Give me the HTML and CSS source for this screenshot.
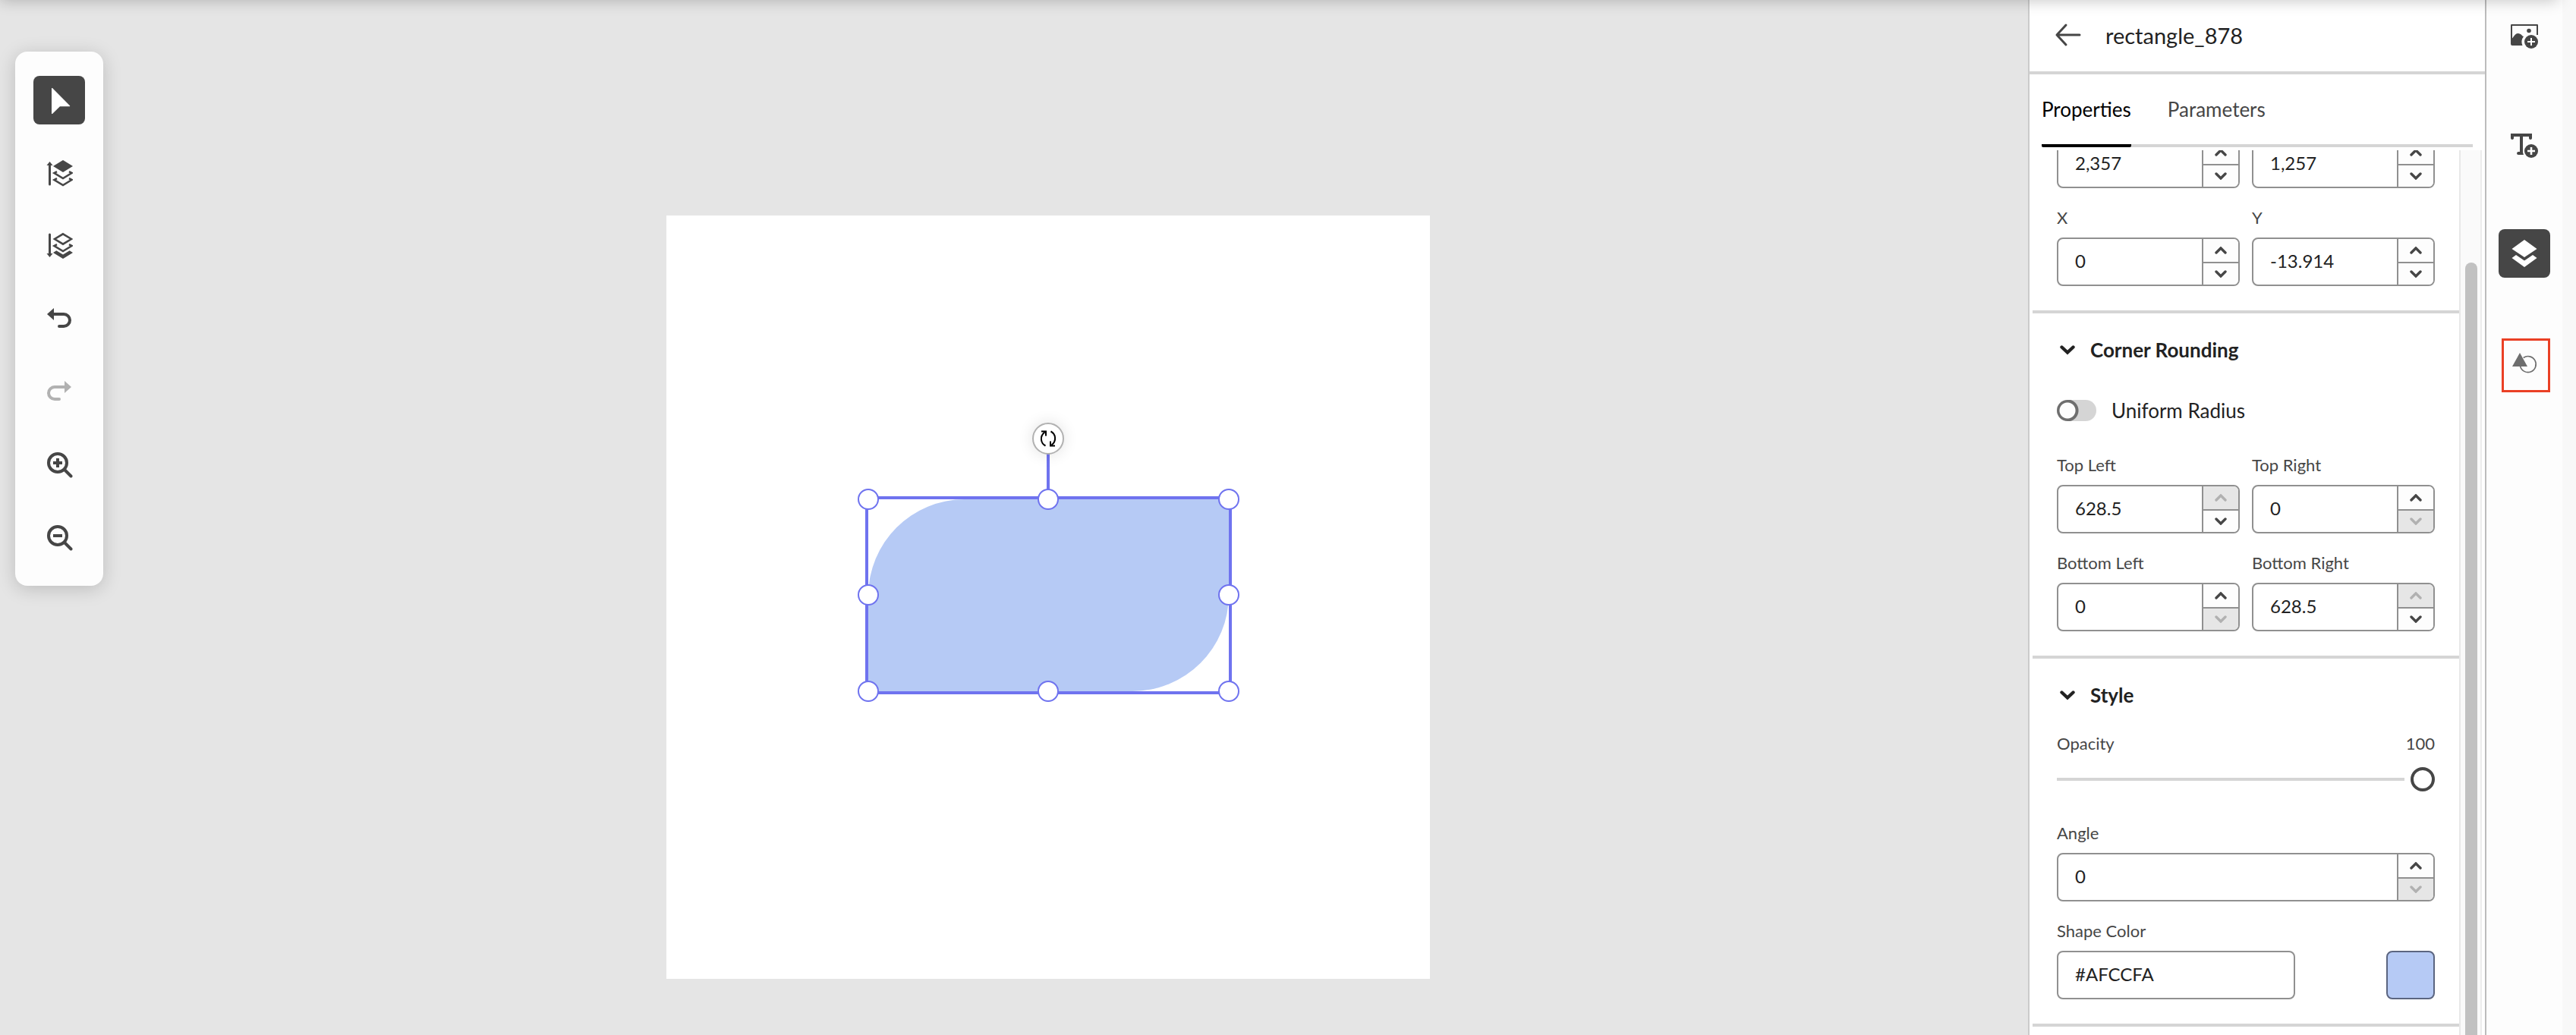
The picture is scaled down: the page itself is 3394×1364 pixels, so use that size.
FILE: index.html
```html
<!DOCTYPE html>
<html lang="en">
<head>
<meta charset="utf-8">
<title>Template editor</title>
<link rel="stylesheet" href="styles.css">
</head>
<body>
<svg class="sprite" aria-hidden="true">
  <symbol id="chev-up" viewBox="0 0 16 10"><path d="M2 8 8 2l6 6" fill="none" stroke="currentColor" stroke-width="3.400" stroke-linecap="round"/></symbol>
  <symbol id="chev-down" viewBox="0 0 16 10"><path d="M2 2l6 6 6-6" fill="none" stroke="currentColor" stroke-width="3.400" stroke-linecap="round"/></symbol>
  <symbol id="chev-section" viewBox="0 0 20 14"><path d="M2.500 3.500 10 10.500l7.500-7" fill="none" stroke="currentColor" stroke-width="4.400" stroke-linecap="round"/></symbol>
</svg>
<div class="app">
  <main class="stage">
    <div class="toolbar" role="toolbar" aria-label="Canvas tools">
      <button class="tool tool-active" aria-label="Select"><svg viewBox="0 0 36 36"><path d="M8 2.500c0-.6.600-.8 1-.4L32 25.300c.4.400.2.900-.3.900H19L9 36c-.4.400-1 .2-1-.4z" fill="#fff"/></svg></button>
      <button class="tool" aria-label="Bring to front"><svg viewBox="0 0 36 36"><path d="M5.500 8v25" stroke="currentColor" stroke-width="3" stroke-linecap="round"/><path d="M5.500 3 9.500 8h-8z" fill="currentColor"/><path d="M23 1 36 9 23 17 10 9z" fill="currentColor"/><path d="M15 16.200 11.500 18 23 25l11.500-7-3.500-1.800M15 25.200 11.500 27 23 34l11.500-7-3.500-1.800" fill="none" stroke="currentColor" stroke-width="2.600"/></svg></button>
      <button class="tool" aria-label="Send to back"><svg viewBox="0 0 36 36"><path d="M5.500 3v25" stroke="currentColor" stroke-width="3" stroke-linecap="round"/><path d="M5.500 33 9.500 28h-8z" fill="currentColor"/><path d="M23 2.300 34 9 23 15.700 12 9zM15 16.200 11.500 18 23 25l11.500-7-3.500-1.800" fill="none" stroke="currentColor" stroke-width="2.600"/><path d="M10 27l4.300-2.700L23 29.500l8.700-5.200L36 27 23 35z" fill="currentColor"/></svg></button>
      <button class="tool" aria-label="Undo"><svg viewBox="0 0 36 36"><path d="M9 12h15a8 8 0 0 1 0 16h-6" fill="none" stroke="currentColor" stroke-width="4" stroke-linecap="round"/><path d="M2 12 11 4v16z" fill="currentColor"/></svg></button>
      <button class="tool" aria-label="Redo" disabled><svg viewBox="0 0 36 36"><path d="M27 12H12a8 8 0 0 0 0 16h6" fill="none" stroke="currentColor" stroke-width="4" stroke-linecap="round"/><path d="M34 12 25 4v16z" fill="currentColor"/></svg></button>
      <button class="tool" aria-label="Zoom in"><svg viewBox="0 0 36 36"><circle cx="16" cy="16" r="12" fill="none" stroke="currentColor" stroke-width="4"/><path d="M25 25l8.500 8.500" stroke="currentColor" stroke-width="4" stroke-linecap="round"/><path d="M16 10v12M10 16h12" stroke="currentColor" stroke-width="4"/></svg></button>
      <button class="tool" aria-label="Zoom out"><svg viewBox="0 0 36 36"><circle cx="16" cy="16" r="12" fill="none" stroke="currentColor" stroke-width="4"/><path d="M25 25l8.500 8.500" stroke="currentColor" stroke-width="4" stroke-linecap="round"/><path d="M10 16h12" stroke="currentColor" stroke-width="4"/></svg></button>
    </div>
    <div class="artboard">
      <div class="selection">
        <div class="shape"></div>
        <div class="stem"></div>
        <button class="rotate" aria-label="Rotate"><svg viewBox="0 0 24 24" fill="none" stroke="#000" stroke-width="2"><path d="M8.500 21.500C2 18 .5 9 7.500 3.500M3 2.500h6v6M15.500 2.500C22 6 23.500 15 16.500 20.500M21 21.500h-6v-6"/></svg></button>
        <i class="handle left top"></i><i class="handle middle top"></i><i class="handle right top"></i>
        <i class="handle left center"></i><i class="handle right center"></i>
        <i class="handle left bottom"></i><i class="handle middle bottom"></i><i class="handle right bottom"></i>
      </div>
    </div>
  </main>

  <aside class="panel">
    <header class="panel-head">
      <button class="back" aria-label="Back"><svg viewBox="0 0 36 32" fill="none" stroke="currentColor" stroke-width="3" stroke-linecap="round" stroke-linejoin="round"><path d="M34 16H4M16 3 4 16l12 13"/></svg></button>
      <h1 class="title">rectangle_878</h1>
    </header>
    <div class="tabs" role="tablist">
      <button class="tab tab-active" role="tab" aria-selected="true">Properties</button>
      <button class="tab" role="tab" aria-selected="false">Parameters</button>
    </div>
    <div class="scroller">
      <div class="sections">
        <section class="section section-scrolled">
          <div class="fields">
            <div class="stepper"><input aria-label="Width" value="2,357"><div class="steps"><button aria-label="Increase width"><svg><use href="#chev-up"/></svg></button><button aria-label="Decrease width"><svg><use href="#chev-down"/></svg></button></div></div>
            <div class="stepper"><input aria-label="Height" value="1,257"><div class="steps"><button aria-label="Increase height"><svg><use href="#chev-up"/></svg></button><button aria-label="Decrease height"><svg><use href="#chev-down"/></svg></button></div></div>
            <div class="field"><label for="x">X</label><div class="stepper"><input id="x" value="0"><div class="steps"><button aria-label="Increase X"><svg><use href="#chev-up"/></svg></button><button aria-label="Decrease X"><svg><use href="#chev-down"/></svg></button></div></div></div>
            <div class="field"><label for="y">Y</label><div class="stepper"><input id="y" value="-13.914"><div class="steps"><button aria-label="Increase Y"><svg><use href="#chev-up"/></svg></button><button aria-label="Decrease Y"><svg><use href="#chev-down"/></svg></button></div></div></div>
          </div>
        </section>

        <section class="section">
          <h2 class="section-title"><svg><use href="#chev-section"/></svg>Corner Rounding</h2>
          <label class="switch"><input type="checkbox">Uniform Radius</label>
          <div class="fields">
            <div class="field"><label for="tl">Top Left</label><div class="stepper"><input id="tl" value="628.5"><div class="steps"><button aria-label="Increase top left" disabled><svg><use href="#chev-up"/></svg></button><button aria-label="Decrease top left"><svg><use href="#chev-down"/></svg></button></div></div></div>
            <div class="field"><label for="tr">Top Right</label><div class="stepper"><input id="tr" value="0"><div class="steps"><button aria-label="Increase top right"><svg><use href="#chev-up"/></svg></button><button aria-label="Decrease top right" disabled><svg><use href="#chev-down"/></svg></button></div></div></div>
            <div class="field"><label for="bl">Bottom Left</label><div class="stepper"><input id="bl" value="0"><div class="steps"><button aria-label="Increase bottom left"><svg><use href="#chev-up"/></svg></button><button aria-label="Decrease bottom left" disabled><svg><use href="#chev-down"/></svg></button></div></div></div>
            <div class="field"><label for="br">Bottom Right</label><div class="stepper"><input id="br" value="628.5"><div class="steps"><button aria-label="Increase bottom right" disabled><svg><use href="#chev-up"/></svg></button><button aria-label="Decrease bottom right"><svg><use href="#chev-down"/></svg></button></div></div></div>
          </div>
        </section>

        <section class="section">
          <h2 class="section-title"><svg><use href="#chev-section"/></svg>Style</h2>
          <div class="slider-head"><label for="opacity">Opacity</label><output for="opacity">100</output></div>
          <input class="slider" id="opacity" type="range" min="0" max="100" value="100">
          <div class="fields fields-single">
            <div class="field"><label for="angle">Angle</label><div class="stepper"><input id="angle" value="0"><div class="steps"><button aria-label="Increase angle"><svg><use href="#chev-up"/></svg></button><button aria-label="Decrease angle" disabled><svg><use href="#chev-down"/></svg></button></div></div></div>
            <div class="field"><label for="color">Shape Color</label><div class="color-row"><input class="text-input" id="color" value="#AFCCFA"><button class="swatch" aria-label="Pick shape color"></button></div></div>
          </div>
        </section>
      </div>
      <div class="track"><div class="thumb"></div></div>
    </div>
  </aside>

  <nav class="rail" aria-label="Panels">
    <button class="rail-item" aria-label="Add image"><svg viewBox="0 -2 36 36"><path d="M35 16V3H1v25" fill="none" stroke="currentColor" stroke-width="2" stroke-linejoin="round"/><path d="M0 22c4-2 5-8 9.500-8S15 18 17 18a12 12 0 0 0-1.500 12H2a2 2 0 0 1-2-2z" fill="currentColor"/><circle cx="24" cy="10.500" r="2.800" fill="currentColor"/><circle cx="27" cy="25" r="9" fill="currentColor"/><path d="M27 20v10M22 25h10" stroke="#fff" stroke-width="2"/></svg></button>
    <button class="rail-item" aria-label="Add text"><svg viewBox="0 -2 36 36"><path d="M0 2h28v6c0 2.500-4 2.500-4 0V6h-8v20.500a12 12 0 0 0 1 3.500H10c-2.500 0-2.500-4 0-4h2V6H4v2c0 2.500-4 2.500-4 0z" fill="currentColor"/><circle cx="27" cy="25" r="9" fill="currentColor"/><path d="M27 20v10M22 25h10" stroke="#fff" stroke-width="2.600"/></svg></button>
    <button class="rail-item rail-active" aria-label="Layers"><svg viewBox="0 0 36 36"><path d="M18 0 34.500 12 18 23 1.500 12zM1.500 24 7 20l11 7.500L29 20l5.500 4L18 36z" fill="#fff"/></svg></button>
    <button class="rail-item rail-marked" aria-label="Shapes"><svg viewBox="2 1 36 36"><path d="M12 2 22 20H2z" fill="currentColor"/><path d="M16.700 8.500a10.500 10.500 0 1 1-4.200 11" fill="none" stroke="currentColor" stroke-width="1.600"/></svg></button>
  </nav>
  <div class="edge"></div>
  <div class="header-shadow"></div>
</div>
</body>
</html>
```
FILE: styles.css
```css
* { box-sizing: border-box; }

body {
  margin: 0;
  background: #e5e5e5;
  color: #222;
  font-family: Lato, "Open Sans", sans-serif;
  font-size: 24px;
}

button, input {
  margin: 0;
  padding: 0;
  border: 0;
  background: none;
  color: inherit;
  font: inherit;
}

.sprite { display: none; }

.app {
  position: relative;
  display: flex;
  height: 100vh;
  overflow: hidden;
}

.header-shadow {
  position: absolute;
  top: -20px;
  left: 0;
  right: 24px;
  height: 20px;
  box-shadow: 0 0 20px rgba(0, 0, 0, .25);
}

/* Canvas */

.stage {
  position: relative;
  flex: 1;
  min-width: 0;
}

.toolbar {
  position: absolute;
  top: 68px;
  left: 20px;
  display: flex;
  flex-direction: column;
  gap: 32px;
  padding: 32px 24px;
  border-radius: 16px;
  background: #fdfdfd;
  box-shadow: 0 4px 24px rgba(0, 0, 0, .18);
}

.tool {
  display: grid;
  place-items: center;
  width: 68px;
  height: 64px;
  border-radius: 8px;
  color: #464646;
}

.tool svg { width: 36px; height: 36px; }
.tool:disabled { color: #b1b1b1; }
.tool-active { background: #464646; }

.artboard {
  position: absolute;
  top: 284px;
  left: 878px;
  width: 1006px;
  height: 1006px;
  background: #fff;
}

.selection {
  position: absolute;
  top: 370px;
  left: 262px;
  width: 483px;
  height: 261px;
  border: 4px solid #6f73ef;
}

.shape {
  height: 100%;
  background: #b6caf5;
  border-radius: 127px 0;
}

.stem {
  position: absolute;
  left: 235px;
  top: -64px;
  width: 4px;
  height: 64px;
  background: #6f73ef;
}

.rotate {
  position: absolute;
  left: 216px;
  top: -101px;
  display: grid;
  place-items: center;
  width: 42px;
  height: 42px;
  border: 2px solid #b1b1b1;
  border-radius: 50%;
  background: #fff;
  box-shadow: 0 0 20px rgba(0, 0, 0, .12);
}

.rotate svg { width: 24px; height: 24px; }

.handle {
  position: absolute;
  width: 28px;
  height: 28px;
  border: 2px solid #6f73ef;
  border-radius: 50%;
  background: #fff;
}

.top { top: -14px; }
.center { top: 112px; }
.bottom { bottom: -14px; }
.left { left: -14px; }
.middle { left: 223px; }
.right { right: -14px; }

/* Properties panel */

.panel {
  display: flex;
  flex-direction: column;
  width: 604px;
  border-left: 2px solid #cbcbcb;
  border-right: 2px solid #bcbcbc;
  background: #fff;
}

.panel-head {
  display: flex;
  align-items: center;
  gap: 32px;
  height: 98px;
  padding: 0 32px 2px;
  border-bottom: 4px solid #d5d5d5;
}

.back { display: grid; color: #464646; }
.back svg { width: 36px; height: 32px; }

.title {
  margin: 0;
  font-size: 29px;
  font-weight: 400;
}

.tabs {
  display: flex;
  gap: 48px;
  height: 96px;
  margin: 0 16px 4px;
  box-shadow: inset 0 -4px #d5d5d5;
}

.tab {
  border-bottom: 4px solid transparent;
  border-radius: 2px;
  color: #464646;
  font-size: 26px;
}

.tab-active { border-color: #000; color: #000; }

.scroller {
  display: flex;
  flex: 1;
  min-height: 0;
  padding: 0 4px;
  overflow: hidden;
}

.sections { flex: 1; }

.section {
  padding: 0 32px 32px;
  border-bottom: 4px solid #d5d5d5;
}

.section-scrolled { margin-top: -14px; }

.section-title {
  display: flex;
  align-items: center;
  gap: 20px;
  height: 98px;
  margin: 0;
  padding: 0 0 2px 4px;
  font-size: 26px;
  font-weight: 700;
}

.section-title svg { width: 20px; height: 14px; }

.fields {
  display: grid;
  grid-template-columns: 1fr 1fr;
  gap: 25px 16px;
}

.fields-single { grid-template-columns: 1fr; }

label, output {
  color: #464646;
  font-size: 22px;
  line-height: 28px;
}

.field {
  display: flex;
  flex-direction: column;
  gap: 12px;
}

.stepper {
  display: flex;
  height: 64px;
  border: 2px solid #909090;
  border-radius: 8px;
  background: #fff;
  overflow: hidden;
}

.stepper input {
  flex: 1;
  width: 0;
  padding: 0 22px 4px;
}

.steps {
  display: grid;
  grid-template-rows: 30px 30px;
  width: 48px;
  border-left: 2px solid #909090;
}

.steps button {
  display: grid;
  place-items: center;
  background: #fdfdfd;
  color: #464646;
}

.steps button + button { border-top: 2px solid #909090; }
.steps button:disabled { background: #e6e6e6; color: #b1b1b1; }
.steps svg { width: 16px; height: 10px; }

.switch {
  display: flex;
  align-items: center;
  gap: 20px;
  height: 28px;
  margin: 16px 0 44px;
  color: #222;
  font-size: 26px;
}

.switch input {
  appearance: none;
  width: 52px;
  height: 28px;
  border-radius: 14px;
  background: radial-gradient(circle at 14px 14px, #fdfdfd 10px, #6e6e6e 11px, #6e6e6e 14px, #d5d5d5 15px);
}

.slider-head {
  display: flex;
  justify-content: space-between;
}

.slider {
  appearance: none;
  display: block;
  width: 100%;
  height: 32px;
  margin: 17px 0 41px;
  background: linear-gradient(#d5d5d5, #d5d5d5) left center / calc(100% - 40px) 4px no-repeat;
}

.slider::-webkit-slider-thumb {
  appearance: none;
  width: 32px;
  height: 32px;
  border: 4px solid #464646;
  border-radius: 50%;
  background: #fff;
}

.color-row {
  display: flex;
  justify-content: space-between;
}

.text-input {
  width: 314px;
  height: 64px;
  padding: 0 22px 4px;
  border: 2px solid #909090;
  border-radius: 8px;
}

.swatch {
  width: 64px;
  height: 64px;
  border: 2px solid #5b6580;
  border-radius: 8px;
  background: #b6caf5;
}

.track {
  width: 30px;
  padding: 148px 6px 0;
  border-left: 2px solid #e8e8e8;
  border-right: 2px solid #ededed;
  background: #fafafa;
}

.thumb {
  width: 16px;
  height: 100%;
  border-radius: 8px 8px 0 0;
  background: #c1c1c1;
}

/* Right rail */

.rail {
  display: flex;
  flex-direction: column;
  gap: 80px;
  width: 100px;
  padding: 14px 16px;
  background: #fdfdfd;
}

.rail-item {
  display: grid;
  place-items: center;
  width: 68px;
  height: 64px;
  border-radius: 8px;
  color: #464646;
}

.rail-item svg { width: 36px; height: 36px; }
.rail-active { background: #464646; }

.rail-marked {
  align-self: flex-end;
  width: 64px;
  height: 71px;
  border: 3px solid #ea4025;
  border-radius: 0;
  color: #6e6e6e;
}

.edge { width: 18px; background: #f8f8f8; }
```
